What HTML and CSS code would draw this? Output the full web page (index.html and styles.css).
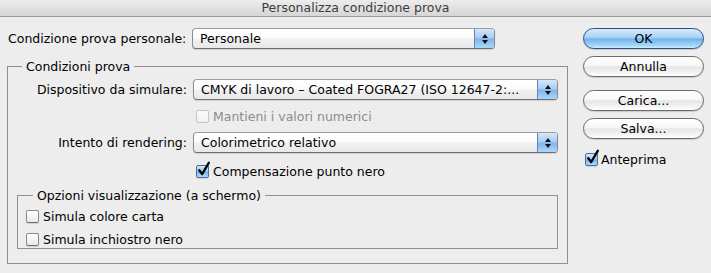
FILE: index.html
```html
<!DOCTYPE html>
<html lang="it">
<head>
<meta charset="utf-8">
<title>Personalizza condizione prova</title>
<link rel="stylesheet" href="styles.css">
</head>
<body>
<div class="window">
  <div class="titlebar">Personalizza condizione prova</div>
  <div class="content">
    <div class="main">
      <div class="form-grid top-row">
        <span class="lbl">Condizione prova personale:</span>
        <div class="popup short"><span class="val">Personale</span><span class="stepper"><svg width="8" height="12" viewBox="0 0 8 12"><path d="M4 1 L7 5 L1 5 Z M4 11 L7 7 L1 7 Z" fill="#111"/></svg></span></div>
      </div>
      <fieldset class="group outer">
        <legend>Condizioni prova</legend>
        <div class="form-grid rows">
          <span class="lbl">Dispositivo da simulare:</span>
          <div class="popup"><span class="val">CMYK di lavoro – Coated FOGRA27 (ISO 12647-2:...</span><span class="stepper"><svg width="8" height="12" viewBox="0 0 8 12"><path d="M4 1 L7 5 L1 5 Z M4 11 L7 7 L1 7 Z" fill="#111"/></svg></span></div>
          <span></span>
          <div class="check disabled"><span class="box"></span><span>Mantieni i valori numerici</span></div>
          <span class="lbl">Intento di rendering:</span>
          <div class="popup"><span class="val">Colorimetrico relativo</span><span class="stepper"><svg width="8" height="12" viewBox="0 0 8 12"><path d="M4 1 L7 5 L1 5 Z M4 11 L7 7 L1 7 Z" fill="#111"/></svg></span></div>
          <span></span>
          <div class="check"><span class="box on"><svg width="15" height="16" viewBox="0 0 15 16"><path d="M3.2 9.2 L6.2 13 L12.8 1.8" fill="none" stroke="#000" stroke-width="2.3" stroke-linecap="round" stroke-linejoin="round"/></svg></span><span>Compensazione punto nero</span></div>
        </div>
        <fieldset class="group inner">
          <legend>Opzioni visualizzazione (a schermo)</legend>
          <div class="inner-rows">
            <div class="check"><span class="box"></span><span>Simula colore carta</span></div>
            <div class="check"><span class="box"></span><span>Simula inchiostro nero</span></div>
          </div>
        </fieldset>
      </fieldset>
    </div>
    <div class="side">
      <button class="btn default">OK</button>
      <button class="btn">Annulla</button>
      <button class="btn gap-big">Carica...</button>
      <button class="btn">Salva...</button>
      <div class="check preview"><span class="box on"><svg width="15" height="16" viewBox="0 0 15 16"><path d="M3.2 9.2 L6.2 13 L12.8 1.8" fill="none" stroke="#000" stroke-width="2.3" stroke-linecap="round" stroke-linejoin="round"/></svg></span><span>Anteprima</span></div>
    </div>
  </div>
</div>
</body>
</html>
```

FILE: styles.css
```css
* { box-sizing: border-box; }
html, body { margin: 0; padding: 0; }
body {
  width: 711px;
  height: 273px;
  background: #ededed;
  font-family: "DejaVu Sans", "Liberation Sans", sans-serif;
  font-size: 12.5px;
  color: #000;
  overflow: hidden;
}
.window { width: 711px; height: 273px; }
.titlebar {
  height: 17px;
  border-bottom: 1px solid #9a9a9a;
  background: linear-gradient(#ececec, #d6d6d6);
  color: #3c3c3c;
  text-align: center;
  line-height: 16px;
  font-size: 12.5px;
}
.content {
  display: flex;
  padding: 11px 0 0 7px;
}
.main { width: 561px; }
.form-grid {
  display: grid;
  grid-template-columns: 178px 365px;
  column-gap: 6px;
  align-items: center;
  padding-left: 1px;
}
.top-row { height: 21px; }
.lbl { text-align: right; white-space: nowrap; }
.top-row .lbl { text-align: left; }
.popup {
  height: 21px;
  border: 1px solid #8a8a8a;
  border-top-color: #9c9c9c;
  border-bottom-color: #6f6f6f;
  border-radius: 4px;
  background: linear-gradient(#ffffff 0%, #fbfbfb 45%, #f0f0f0 55%, #e8e8e8 100%);
  box-shadow: 0 1px 1px rgba(0,0,0,0.12);
  display: flex;
  align-items: center;
  overflow: hidden;
}
.popup.short { width: 303px; }
.popup .val {
  flex: 1;
  padding-left: 7px;
  white-space: nowrap;
  overflow: hidden;
  line-height: 19px;
}
.stepper {
  width: 20px;
  height: 19px;
  border-left: 1px solid #5f86b8;
  background: linear-gradient(#d4e8fb 0%, #a7cdf3 45%, #7fb6ec 55%, #a9d8fb 100%);
  display: flex;
  align-items: center;
  justify-content: center;
}
.group {
  margin: 0;
  padding: 0;
  border: 1px solid #8f8f8f;
  min-width: 0;
}
.group legend {
  padding: 0 4px;
  line-height: 15px;
}
.outer {
  margin-top: 10px;
  height: 205px;
}
.outer > legend { margin-left: 14px; }
.rows {
  grid-template-rows: 21px 20px 21px 20px;
  row-gap: 6px;
  padding-top: 5px;
}
.rows > .check:last-child { margin-top: 4px; }
.check {
  display: flex;
  align-items: center;
  gap: 4px;
  height: 20px;
  white-space: nowrap;
}
.rows .check { padding-left: 3px; }
.box {
  position: relative;
  width: 13px;
  height: 13px;
  border: 1px solid #8a8a8a;
  border-bottom-color: #6e6e6e;
  border-radius: 2px;
  background: linear-gradient(#ffffff, #e9e9e9);
  box-shadow: 0 1px 1px rgba(0,0,0,0.12);
  flex: none;
}
.box.on {
  border-color: #4b6f9b;
  background: linear-gradient(#d1e7fb 0%, #a2cbf2 45%, #76b1ea 55%, #b0dcfb 100%);
}
.box svg {
  position: absolute;
  left: -1px;
  top: -5px;
}
.check.disabled { color: #8c8c8c; }
.check.disabled .box {
  border-color: #c4c4c4;
  background: linear-gradient(#fbfbfb, #f1f1f1);
  box-shadow: none;
}
.inner {
  margin: 9px 9px 0 9px;
  height: 61px;
}
.inner > legend { margin-left: 15px; }
.inner-rows {
  padding: 3px 0 0 8px;
  display: flex;
  flex-direction: column;
  gap: 3px;
}
.side {
  margin-left: 15px;
  width: 121px;
  display: flex;
  flex-direction: column;
  align-items: stretch;
}
.btn {
  height: 21px;
  margin: 0 0 7px 0;
  border: 1px solid #6a6a6a;
  border-radius: 11px;
  background: linear-gradient(#ffffff 0%, #f7f7f7 45%, #e6e6e6 52%, #f2f2f2 80%, #ffffff 100%);
  box-shadow: 0 1px 1px rgba(0,0,0,0.15);
  font-family: inherit;
  font-size: 12.5px;
  color: #000;
  padding: 0;
  line-height: 19px;
}
.btn.default {
  border-color: #2f4f7f;
  background: linear-gradient(#d6ebfd 0%, #a8d1f6 45%, #74b2ec 52%, #9fd4fb 85%, #cdeeff 100%);
}
.btn.gap-big { margin-top: 6px; }
.preview { margin-top: 3px; padding-left: 2px; gap: 3px; }
```
